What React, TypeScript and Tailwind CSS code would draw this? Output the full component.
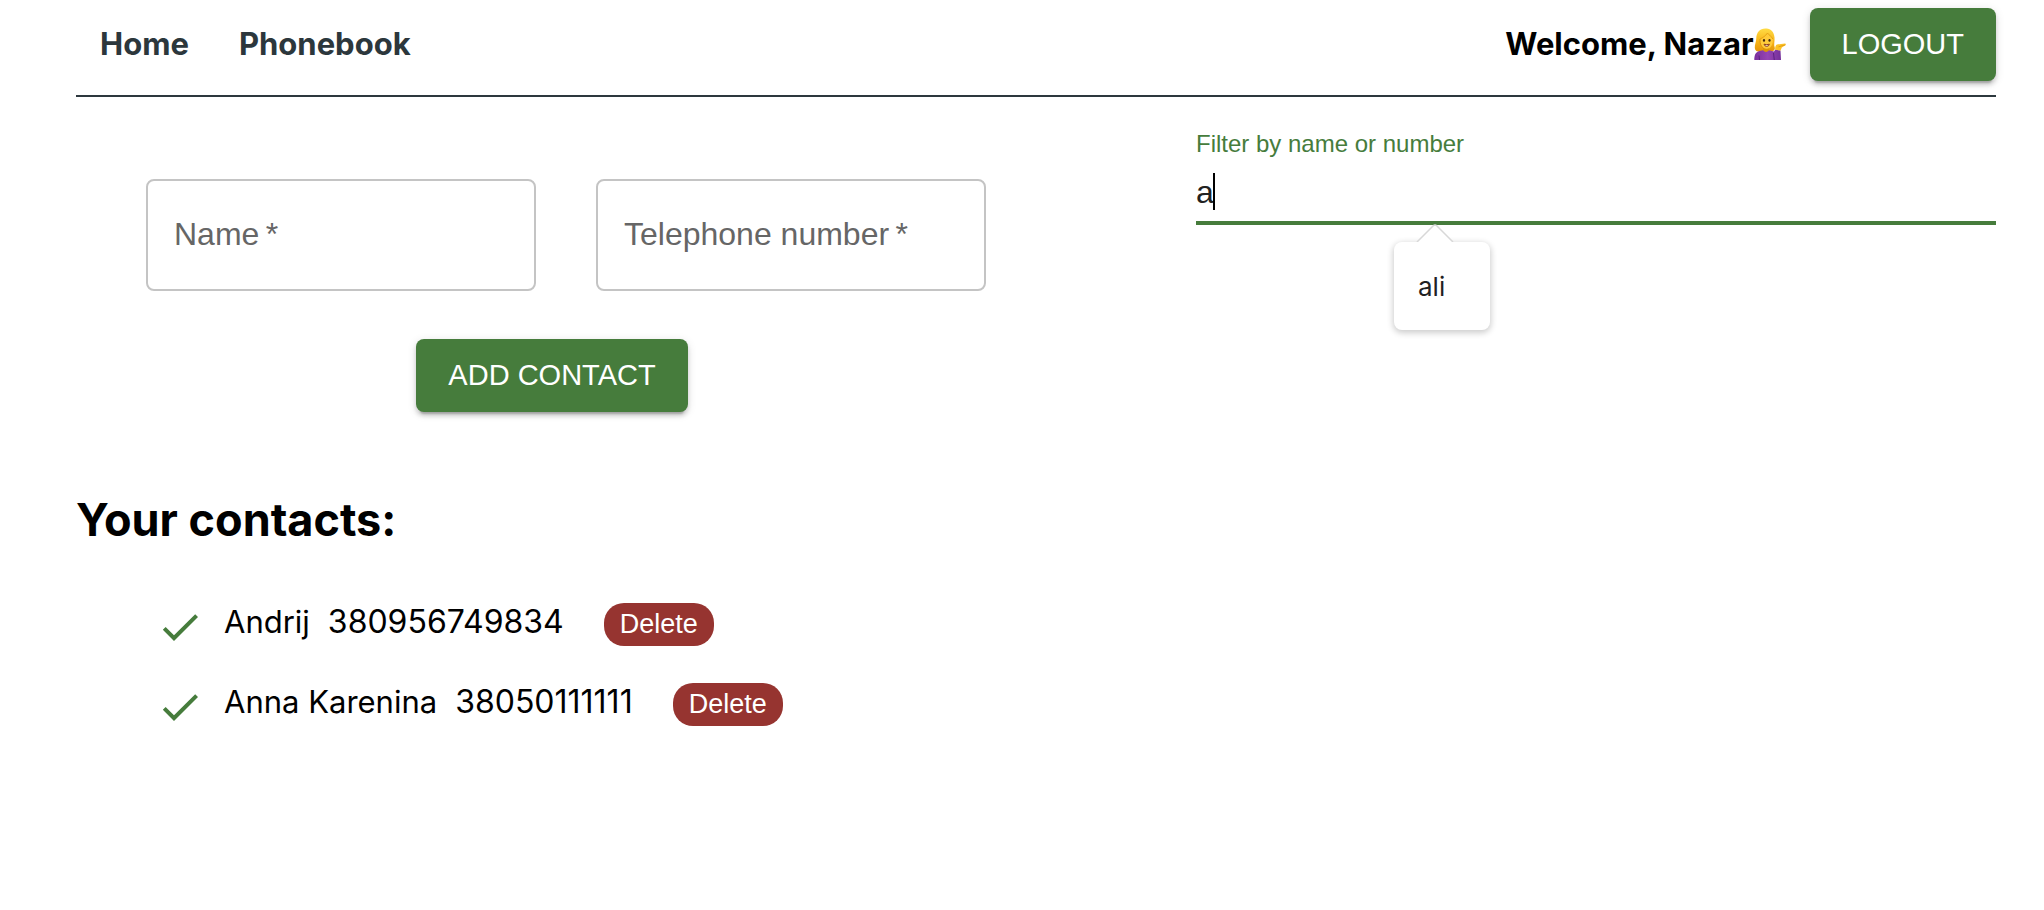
import React from "react";

type Contact = { id: number; name: string; number: string };

const contacts: Contact[] = [
  { id: 1, name: "Andrij", number: "380956749834" },
  { id: 2, name: "Anna Karenina", number: "38050111111" },
];

function TippingHandEmoji() {
  return (
    <svg viewBox="0 0 32 32" className="mb-0.5 size-8 shrink-0" role="img" aria-label="person tipping hand">
      <defs>
        <linearGradient id="hair" x1="0" y1="0" x2="0" y2="1">
          <stop offset="0" stopColor="#ffdc45" />
          <stop offset="0.55" stopColor="#f8b51a" />
          <stop offset="1" stopColor="#e39409" />
        </linearGradient>
        <linearGradient id="shirt" x1="0" y1="0" x2="1" y2="0">
          <stop offset="0" stopColor="#7a2f9c" />
          <stop offset="0.5" stopColor="#9645b4" />
          <stop offset="1" stopColor="#74309a" />
        </linearGradient>
      </defs>
      <path d="M12.500 0.500C6 0 2.600 4 2.300 10 2.200 14 .6 16.500 .8 20 1 23 3.500 24 6.500 23.800L17 23.500C19.500 23.500 21.600 21.500 20.600 19 19.600 17 20.900 13 20.500 9.500 20 4 17 .9 12.500 .5Z" fill="url(#hair)" />
      <path d="M9 18h6v6.500H9z" fill="#dd9404" />
      <path d="M.3 32C.3 27 1.500 24 5.500 23L9 22.300Q12 25.500 15 22.300L20 23.500 21.300 21.500 26.500 22.500 27 32Z" fill="url(#shirt)" />
      <path d="M19.500 25L20.300 32M5 27.500L5.500 32" stroke="#5c2080" strokeWidth="1" fill="none" />
      <path d="M6 11C8.500 10 11.500 8 13.500 5 15 7.500 18 8.500 18.800 11 19.300 16.500 16.500 20.800 12.700 20.800 8.500 20.800 5.800 16.500 6 11Z" fill="#ffcb3a" />
      <path d="M6 11C8.500 10 11.500 8 13.500 5 15 7.500 18 8.500 18.800 11" fill="none" stroke="#e09a10" strokeWidth=".8" />
      <path d="M6 11C5.600 16 7.500 19 9.500 20.200" fill="none" stroke="#d98a0a" strokeWidth=".8" />
      <ellipse cx="10" cy="12.400" rx="1.100" ry="1.300" fill="#45280c" />
      <ellipse cx="15.500" cy="12.400" rx="1.100" ry="1.300" fill="#45280c" />
      <path d="M10 16.200q2.800 1 5.400 0-.6 2.200-2.700 2.200t-2.700-2.200Z" fill="#fff3e0" stroke="#8c3c1c" strokeWidth="1" />
      <path d="M21.200 21.700C21 19 21.600 17.200 23 16.600L27 15.900 31 15.500C32.300 15.800 31.800 16.900 31 17.400L27.800 19.500 26.600 22.500Z" fill="#fcc227" />
      <path d="M24.500 18.800L28 17.800 31.300 16.900" stroke="#d98f0c" strokeWidth=".7" fill="none" />
    </svg>
  );
}

function OutlinedField({ id, label, type }: { id: string; label: string; type: string }) {
  return (
    <div className="relative min-w-0 flex-1">
      <input
        id={id}
        type={type}
        required
        className="h-28 w-full rounded-lg border-2 border-[#c4c4c4] bg-transparent px-[26px] text-[32px] text-[#212121] shadow-none outline-none"
      />
      <label
        htmlFor={id}
        className="pointer-events-none absolute inset-y-0 left-7 flex items-center pb-0.5 text-[32px] whitespace-pre text-[#666666]"
      >
        {label}
        {"\u2009*"}
      </label>
    </div>
  );
}

const greenButton =
  "h-[73px] cursor-pointer rounded-lg bg-[#467c3c] px-8 text-[29px] uppercase text-white shadow-[0_6px_2px_-4px_rgba(0,0,0,0.2),0_4px_4px_0_rgba(0,0,0,0.14),0_2px_10px_0_rgba(0,0,0,0.12)]";

export default function App() {
  return (
    <div className="min-h-screen bg-white pr-12 pl-[76px] font-['Liberation_Sans',Arial,sans-serif] text-black">
      <header className="flex items-center justify-between border-b-2 border-[#2d383e] pt-2 pb-[14px] font-['Inter',sans-serif] text-[31px] font-bold">
        <nav className="flex gap-[50px] pl-6 text-[#2c373c]">
          <a href="#home">Home</a>
          <a href="#phonebook">Phonebook</a>
        </nav>
        <div className="flex items-center gap-6">
          <p className="flex items-center">
            Welcome, Nazar
            <TippingHandEmoji />
          </p>
          <button type="button" className={`${greenButton} font-['Liberation_Sans',Arial,sans-serif] font-normal`}>
            Logout
          </button>
        </div>
      </header>

      <main>
        <div className="grid grid-cols-[980fr_800fr] gap-[140px]">
          <form className="flex flex-col px-[70px] pt-[82px]" onSubmit={(e) => e.preventDefault()}>
            <div className="flex w-full gap-[60px]">
              <OutlinedField id="name" label="Name" type="text" />
              <OutlinedField id="number" label="Telephone number" type="tel" />
            </div>
            <div className="mt-12 flex justify-center pr-7">
              <button type="submit" className={greenButton}>
                Add contact
              </button>
            </div>
          </form>

          <div className="pt-[31px]">
            <label htmlFor="filter" className="block pb-px text-2xl text-[#467c3c]">
              Filter by name or number
            </label>
            <div className="relative">
              <input
                id="filter"
                type="text"
                defaultValue="a"
                autoComplete="off"
                className="block h-16 w-full border-b-4 border-[#467c3c] bg-transparent pt-0.5 text-[32px] text-[#212121] caret-transparent outline-none"
              />
              <span aria-hidden="true" className="absolute top-3 left-[17px] h-[37px] w-[2px] bg-black" />
              <div className="absolute top-full left-[198px] mt-[17px] flex h-[88px] w-24 items-center rounded-lg bg-white pl-6 font-['Inter',sans-serif] text-[26px] text-[#1f2123] shadow-[0_2px_6px_1px_rgba(0,0,0,0.2)]">
                <svg viewBox="0 0 38 18" className="absolute bottom-full left-[22px] h-[18px] w-[38px]" aria-hidden="true">
                  <path d="M1 18L17 2Q19 0 21 2L37 18" fill="#fff" stroke="#d8d8d8" strokeWidth="1.500" />
                </svg>
                ali
              </div>
            </div>
          </div>
        </div>

        <h2 className="mt-[76px] font-['Inter',sans-serif] text-[45px] leading-[64px] font-bold">Your contacts:</h2>
        <ul className="mt-8 pl-20 font-['Inter',sans-serif]">
          {contacts.map((c) => (
            <li key={c.id} className="flex h-20 items-center">
              <svg viewBox="0 0 48 48" className="mt-1.5 size-12 shrink-0 text-[#467c3c]" aria-hidden="true">
                <path
                  d="M18 32.340L9.660 24l-2.840 2.820L18 38 42 14l-2.820-2.820z"
                  fill="currentColor"
                />
              </svg>
              <span className="ml-5 pb-1 text-[31px]">{c.name}</span>
              <span className="ml-[18px] pb-1 text-[32px]">{c.number}</span>
              <button
                type="button"
                className="ml-10 h-[43px] cursor-pointer rounded-[20px] bg-[#963430] px-4 font-['Liberation_Sans',Arial,sans-serif] text-[27px] leading-none text-white"
              >
                Delete
              </button>
            </li>
          ))}
        </ul>
      </main>
    </div>
  );
}
